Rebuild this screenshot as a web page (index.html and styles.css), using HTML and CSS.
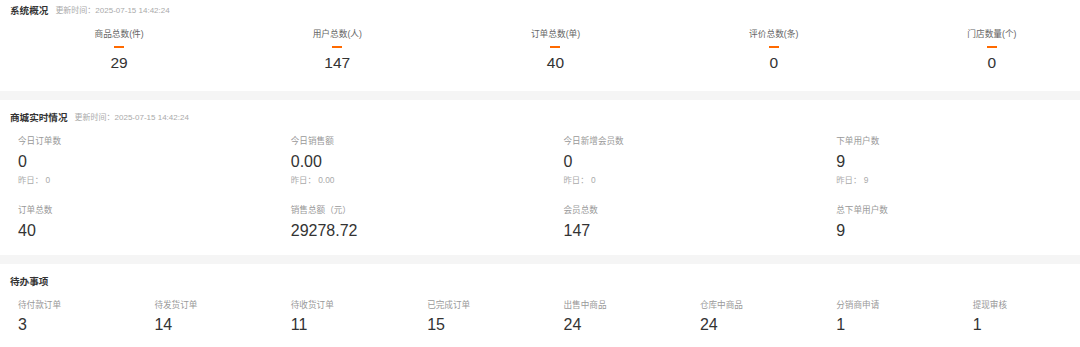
FILE: index.html
```html
<!DOCTYPE html>
<html lang="zh-CN">
<head>
<meta charset="utf-8">
<title>概况</title>
<link rel="stylesheet" href="styles.css">
</head>
<body>
<div class="page">
  <section class="panel panel-overview">
    <div class="panel-head head-top">
      <span class="panel-title">系统概况</span>
      <span class="panel-sub">更新时间：2025-07-15 14:42:24</span>
    </div>
    <div class="overview-grid">
      <div class="ov-item"><div class="ov-label">商品总数(件)</div><div class="ov-dash"></div><div class="ov-value">29</div></div>
      <div class="ov-item"><div class="ov-label">用户总数(人)</div><div class="ov-dash"></div><div class="ov-value">147</div></div>
      <div class="ov-item"><div class="ov-label">订单总数(单)</div><div class="ov-dash"></div><div class="ov-value">40</div></div>
      <div class="ov-item"><div class="ov-label">评价总数(条)</div><div class="ov-dash"></div><div class="ov-value">0</div></div>
      <div class="ov-item"><div class="ov-label">门店数量(个)</div><div class="ov-dash"></div><div class="ov-value">0</div></div>
    </div>
  </section>

  <section class="panel panel-live">
    <div class="panel-head">
      <span class="panel-title">商城实时情况</span>
      <span class="panel-sub">更新时间：2025-07-15 14:42:24</span>
    </div>
    <div class="live-grid">
      <div class="stat"><div class="stat-label">今日订单数</div><div class="stat-value">0</div><div class="stat-prev">昨日： 0</div></div>
      <div class="stat"><div class="stat-label">今日销售额</div><div class="stat-value">0.00</div><div class="stat-prev">昨日： 0.00</div></div>
      <div class="stat"><div class="stat-label">今日新增会员数</div><div class="stat-value">0</div><div class="stat-prev">昨日： 0</div></div>
      <div class="stat"><div class="stat-label">下单用户数</div><div class="stat-value">9</div><div class="stat-prev">昨日： 9</div></div>
    </div>
    <div class="live-grid live-row2">
      <div class="stat"><div class="stat-label">订单总数</div><div class="stat-value">40</div></div>
      <div class="stat"><div class="stat-label">销售总额（元）</div><div class="stat-value">29278.72</div></div>
      <div class="stat"><div class="stat-label">会员总数</div><div class="stat-value">147</div></div>
      <div class="stat"><div class="stat-label">总下单用户数</div><div class="stat-value">9</div></div>
    </div>
  </section>

  <section class="panel panel-todo">
    <div class="panel-head">
      <span class="panel-title">待办事项</span>
    </div>
    <div class="todo-grid">
      <div class="stat"><div class="stat-label">待付款订单</div><div class="stat-value">3</div></div>
      <div class="stat"><div class="stat-label">待发货订单</div><div class="stat-value">14</div></div>
      <div class="stat"><div class="stat-label">待收货订单</div><div class="stat-value">11</div></div>
      <div class="stat"><div class="stat-label">已完成订单</div><div class="stat-value">15</div></div>
      <div class="stat"><div class="stat-label">出售中商品</div><div class="stat-value">24</div></div>
      <div class="stat"><div class="stat-label">仓库中商品</div><div class="stat-value">24</div></div>
      <div class="stat"><div class="stat-label">分销商申请</div><div class="stat-value">1</div></div>
      <div class="stat"><div class="stat-label">提现审核</div><div class="stat-value">1</div></div>
    </div>
  </section>
</div>
</body>
</html>
```

FILE: styles.css
```css
html, body {
  margin: 0;
  padding: 0;
  background: #f5f5f5;
  overflow: hidden;
}

body {
  font-family: "Liberation Sans", "Noto Sans CJK SC", Arial, sans-serif;
  color: #333;
}

.page {
  width: 1111px;
  display: flex;
  flex-direction: column;
  gap: 9px;
}

.panel {
  background: #fff;
  padding: 0 10px;
  box-sizing: border-box;
}

.panel-overview { height: 91px; }
.panel-live { height: 155px; }
.panel-todo { height: 90px; }

.panel-head {
  display: flex;
  align-items: center;
  gap: 7px;
  height: 19px;
  padding-top: 8px;
}

.panel-head.head-top {
  padding-top: 0;
  height: 20px;
}

.panel-title {
  font-size: 9.6px;
  font-weight: bold;
  color: #333;
  line-height: 19px;
}

.panel-sub {
  font-size: 8px;
  color: #aaa;
  line-height: 19px;
}

/* overview */
.overview-grid {
  display: grid;
  grid-template-columns: repeat(5, 1fr);
  margin-top: 8px;
}

.ov-item {
  display: flex;
  flex-direction: column;
  align-items: center;
}

.ov-label {
  font-size: 8.7px;
  line-height: 12px;
  color: #666;
}

.ov-dash {
  width: 10px;
  height: 2px;
  margin-top: 6px;
  background: #ff6a00;
}

.ov-value {
  font-size: 15.5px;
  line-height: 20px;
  margin-top: 5px;
  color: #333;
}

/* stats */
.live-grid {
  display: grid;
  grid-template-columns: repeat(4, 1fr);
  margin-top: 8px;
}

.live-row2 {
  margin-top: 18px;
}

.todo-grid {
  display: grid;
  grid-template-columns: repeat(8, 1fr);
  margin-top: 8px;
}

.stat {
  padding-left: 8px;
  display: flex;
  flex-direction: column;
}

.stat-label {
  font-size: 8.6px;
  line-height: 12px;
  color: #999;
}

.stat-value {
  font-size: 16px;
  line-height: 20px;
  margin-top: 5px;
  color: #333;
}

.todo-grid .stat-value {
  margin-top: 4px;
}

.stat-prev {
  font-size: 8.4px;
  line-height: 12px;
  margin-top: 2px;
  color: #aaa;
}
```
